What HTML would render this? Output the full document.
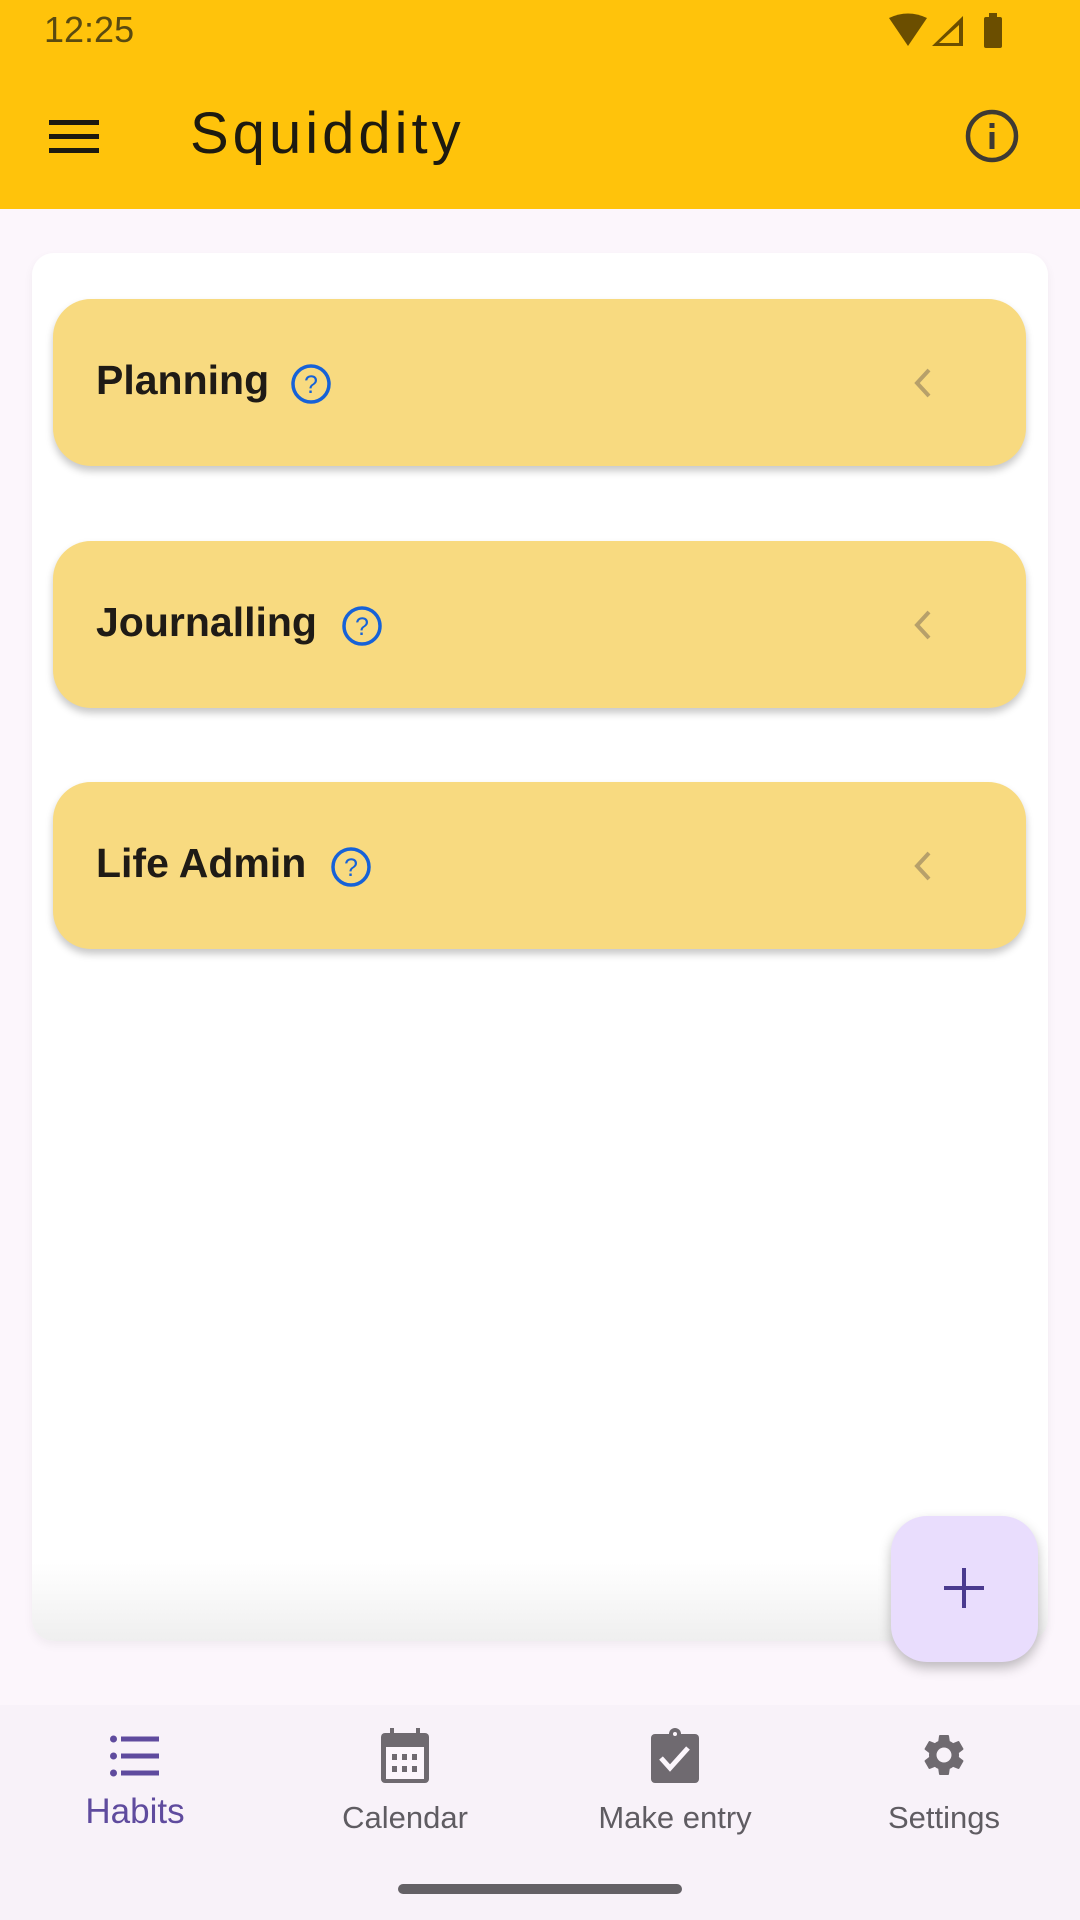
<!DOCTYPE html>
<html><head><meta charset="utf-8"><style>
*{margin:0;padding:0;box-sizing:border-box}
body{width:1080px;height:1920px;background:#fcf6fc;font-family:"Liberation Sans",sans-serif;position:relative;overflow:hidden}
.top{position:absolute;left:0;top:0;width:1080px;height:209px;background:#ffc30b}
.time{position:absolute;left:44px;top:9px;font-size:36px;color:#5a4a10}
.title{position:absolute;left:190px;top:100px;font-size:58px;color:#1d1a10;letter-spacing:4px}
.card{position:absolute;left:32px;top:253px;width:1016px;height:1388px;border-radius:22px;background:linear-gradient(#fff 0,#fff 1310px,#efefef 1388px);box-shadow:0 4px 10px rgba(0,0,0,.05)}
.item{position:absolute;left:53px;width:973px;height:167px;border-radius:38px;background:#f8da80;box-shadow:0 5px 8px rgba(0,0,0,.22)}
.item span{position:absolute;left:43px;top:58px;font-size:41px;font-weight:bold;color:#1f1b16}
.item svg.q{position:absolute;top:64px}
.item svg.c{position:absolute;left:856px;top:67px}
.fab{position:absolute;left:891px;top:1516px;width:147px;height:146px;border-radius:36px;background:#e9ddfd;box-shadow:0 6px 12px rgba(0,0,0,.25)}
.nav{position:absolute;left:0;top:1705px;width:1080px;height:215px;background:#f8f2f9}
.lbl{position:absolute;top:1800px;font-size:31px;color:#5f5c62;text-align:center;width:240px}
.home{position:absolute;left:398px;top:1884px;width:284px;height:10px;border-radius:5px;background:#646166}
</style></head><body>
<div class="top">
<div class="time">12:25</div>
<svg style="position:absolute;left:889px;top:12px" width="120" height="38" viewBox="0 0 120 38">
<path d="M0 6 Q19 -3 38 6 L19 34 Z" fill="#6b4e00"/>
<path d="M43 34 L74 4 L74 34 Z M50 31 L70 31 L70 13 Z" fill="#6b4e00" fill-rule="evenodd"/>
<rect x="95" y="5" width="18" height="31" rx="2" fill="#6b4e00"/><rect x="100" y="1" width="8" height="5" fill="#6b4e00"/>
</svg>
<svg style="position:absolute;left:49px;top:120px" width="50" height="34"><rect y="0" width="50" height="5" fill="#1d1a10"/><rect y="14" width="50" height="5" fill="#1d1a10"/><rect y="28" width="50" height="5" fill="#1d1a10"/></svg>
<div class="title">Squiddity</div>
<svg style="position:absolute;left:964px;top:108px" width="56" height="56" viewBox="0 0 56 56"><circle cx="28" cy="28" r="24" fill="none" stroke="#3e3a33" stroke-width="4.5"/><rect x="25.5" y="24" width="5" height="17" fill="#3e3a33"/><rect x="25.5" y="15" width="5" height="5" fill="#3e3a33"/></svg>
</div>
<div class="card"></div>
<div class="item" style="top:299px"><span>Planning</span><svg class="q" style="left:237px" width="42" height="42" viewBox="0 0 42 42"><circle cx="21" cy="21" r="18" fill="none" stroke="#1662d8" stroke-width="3.5"/><text x="21" y="30" font-size="25" text-anchor="middle" fill="#1662d8" font-family="Liberation Sans">?</text></svg><svg class="c" width="30" height="34" viewBox="0 0 30 34"><path d="M20 4 L8 17 L20 30" fill="none" stroke="#b7a06a" stroke-width="4"/></svg></div>
<div class="item" style="top:541px"><span>Journalling</span><svg class="q" style="left:288px" width="42" height="42" viewBox="0 0 42 42"><circle cx="21" cy="21" r="18" fill="none" stroke="#1662d8" stroke-width="3.5"/><text x="21" y="30" font-size="25" text-anchor="middle" fill="#1662d8" font-family="Liberation Sans">?</text></svg><svg class="c" width="30" height="34" viewBox="0 0 30 34"><path d="M20 4 L8 17 L20 30" fill="none" stroke="#b7a06a" stroke-width="4"/></svg></div>
<div class="item" style="top:782px"><span>Life Admin</span><svg class="q" style="left:277px" width="42" height="42" viewBox="0 0 42 42"><circle cx="21" cy="21" r="18" fill="none" stroke="#1662d8" stroke-width="3.5"/><text x="21" y="30" font-size="25" text-anchor="middle" fill="#1662d8" font-family="Liberation Sans">?</text></svg><svg class="c" width="30" height="34" viewBox="0 0 30 34"><path d="M20 4 L8 17 L20 30" fill="none" stroke="#b7a06a" stroke-width="4"/></svg></div>
<div class="fab"><svg style="position:absolute;left:53px;top:52px" width="40" height="40"><rect x="18" y="0" width="4" height="40" fill="#4a3a8f"/><rect x="0" y="18" width="40" height="4" fill="#4a3a8f"/></svg></div>
<div class="nav"></div>
<svg style="position:absolute;left:110px;top:1735px" width="50" height="42"><circle cx="3.5" cy="4" r="3.5" fill="#5f4b9e"/><circle cx="3.5" cy="21" r="3.5" fill="#5f4b9e"/><circle cx="3.5" cy="38" r="3.5" fill="#5f4b9e"/><rect x="11" y="1.5" width="38" height="5" fill="#5f4b9e"/><rect x="11" y="18.5" width="38" height="5" fill="#5f4b9e"/><rect x="11" y="35.5" width="38" height="5" fill="#5f4b9e"/></svg>
<div class="lbl" style="left:15px;top:1792px;color:#5f4b9e;font-size:35px">Habits</div>
<svg style="position:absolute;left:381px;top:1728px" width="48" height="56" viewBox="0 0 48 56"><rect x="0" y="5" width="48" height="50" rx="4" fill="#6f6a70"/><rect x="9" y="0" width="4" height="10" fill="#6f6a70"/><rect x="35" y="0" width="4" height="10" fill="#6f6a70"/><rect x="5" y="19" width="38" height="32" fill="#fcf6fc"/><g fill="#6f6a70"><rect x="11" y="26" width="5" height="6"/><rect x="21" y="26" width="5" height="6"/><rect x="31" y="26" width="5" height="6"/><rect x="11" y="38" width="5" height="6"/><rect x="21" y="38" width="5" height="6"/><rect x="31" y="38" width="5" height="6"/></g></svg>
<div class="lbl" style="left:285px">Calendar</div>
<svg style="position:absolute;left:651px;top:1728px" width="48" height="56" viewBox="0 0 48 56"><rect x="0" y="6" width="48" height="49" rx="4" fill="#6f6a70"/><circle cx="24" cy="6" r="6" fill="#6f6a70"/><circle cx="24" cy="6" r="2" fill="#fcf6fc"/><path d="M10 30 L19 40 L37 20" fill="none" stroke="#fcf6fc" stroke-width="5"/></svg>
<div class="lbl" style="left:555px">Make entry</div>
<svg style="position:absolute;left:919px;top:1729px" width="50" height="52" viewBox="0 0 24 24"><path fill="#6f6a70" d="M19.14 12.94c.04-.3.06-.61.06-.94 0-.32-.02-.64-.07-.94l2.03-1.580a.49.49 0 0 0 .12-.61l-1.92-3.32a.49.49 0 0 0-.59-.22l-2.39.96c-.5-.38-1.03-.7-1.62-.94l-.36-2.54a.48.48 0 0 0-.48-.41h-3.84c-.24 0-.43.17-.47.41l-.36 2.54c-.59.24-1.13.57-1.620.94l-2.39-.96a.49.49 0 0 0-.59.22L2.74 8.87c-.12.21-.08.47.12.61l2.03 1.58c-.05.3-.09.63-.09.94s.02.64.07.94l-2.03 1.58a.49.49 0 0 0-.12.61l1.92 3.32c.12.22.37.29.59.22l2.39-.96c.5.38 1.03.7 1.62.94l.36 2.54c.05.24.24.41.48.41h3.84c.24 0 .44-.17.47-.41l.36-2.54c.59-.24 1.13-.56 1.62-.94l2.39.96c.22.08.47 0 .59-.22l1.92-3.32c.12-.22.07-.47-.12-.61l-2.01-1.58zM12 15.6c-1.98 0-3.6-1.62-3.6-3.6s1.62-3.6 3.6-3.6 3.6 1.62 3.6 3.6-1.62 3.6-3.6 3.6z"/></svg>
<div class="lbl" style="left:824px">Settings</div>
<div class="home"></div>
</body></html>
